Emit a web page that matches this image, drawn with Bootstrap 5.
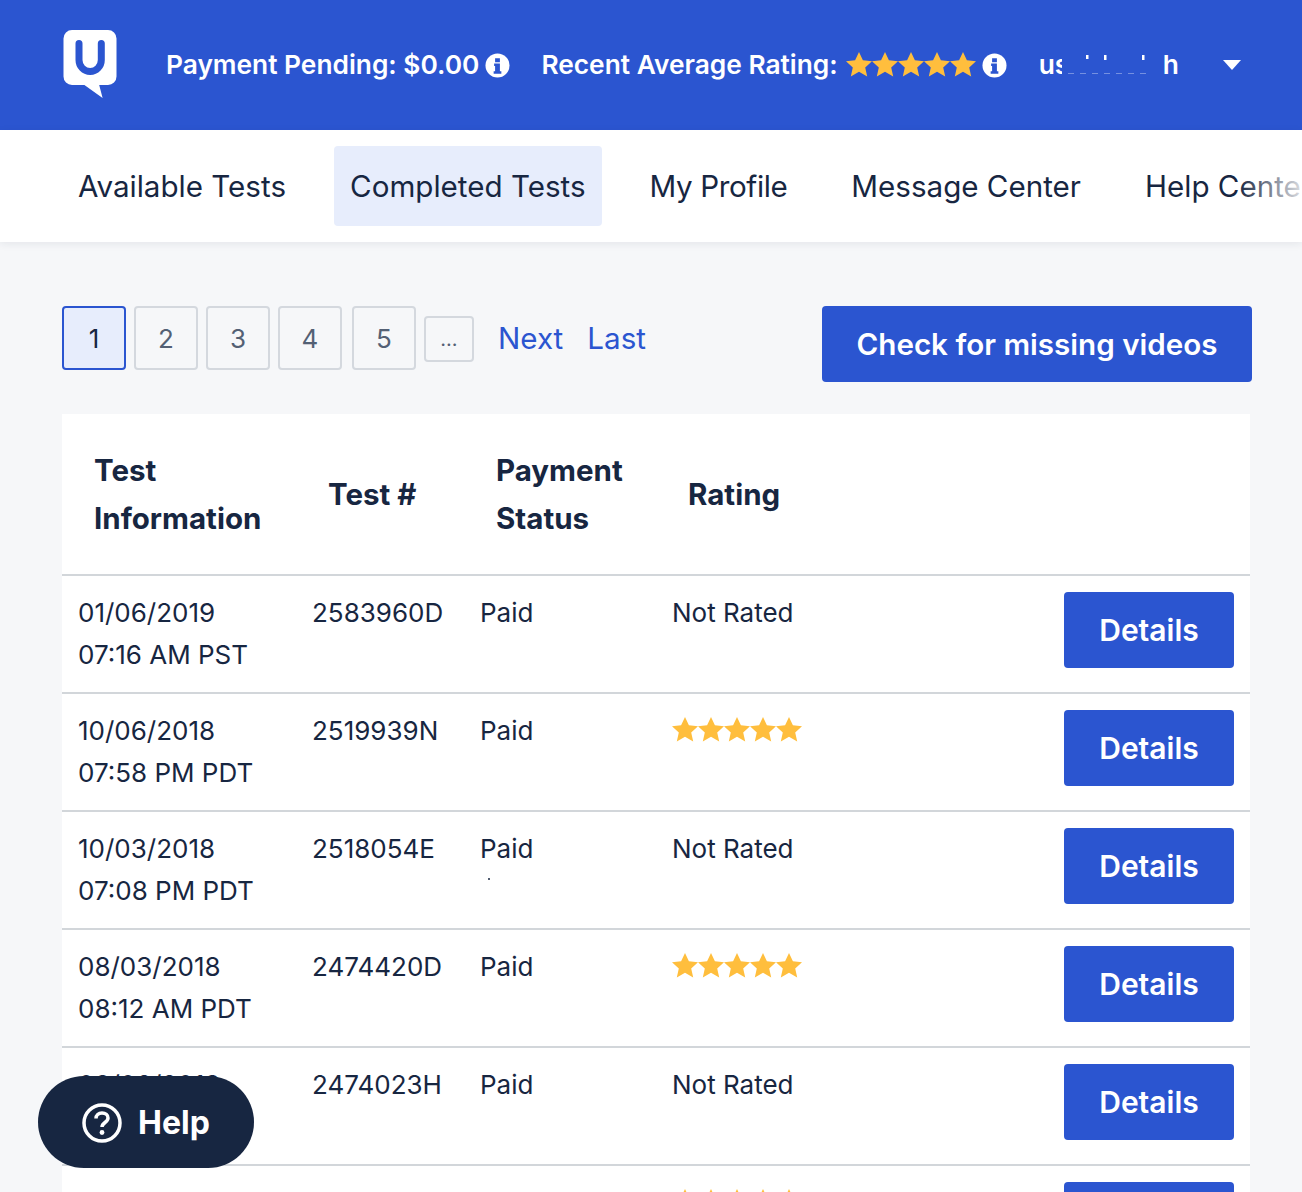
<!DOCTYPE html>
<html lang="en"><head><meta charset="utf-8"><title>Completed Tests</title>
<link href="https://cdn.jsdelivr.net/npm/bootstrap@5.3.0/dist/css/bootstrap.min.css" rel="stylesheet">
<style>
html,body{height:1192px;overflow:hidden}
body{background:#f6f7f9;font-family:Inter,"Liberation Sans",sans-serif;color:#172641;font-size:26px}
.top-bar{background:#2b55d0;height:130px;color:#fff;font-weight:600;font-size:26.3px;white-space:nowrap}
.brand-mark{margin-left:63px;margin-right:49px;margin-bottom:2px}
.info-ico{margin-left:6px}
.rating-part{margin-left:31px}
.user-name{margin-left:32px;width:184px}
.user-cut{display:inline-block;width:23px;overflow:hidden}
.tab-strip{background:#fff;height:112px;box-shadow:0 2px 8px rgba(23,38,65,.08);overflow:hidden;white-space:nowrap;padding:16px 0 16px 62px;gap:32px}
.tab-item{color:#172641;text-decoration:none;font-size:29.6px;padding:0 16px;height:80px;line-height:80px;border-radius:4px;flex:none}
.tab-item.is-on{background:#e7edfc}
.tab-tight{letter-spacing:-.4px}
.tab-fade{position:absolute;right:0;top:130px;width:64px;height:110px;background:linear-gradient(90deg,rgba(255,255,255,0),rgba(255,255,255,.85))}
.page-area{padding:64px 50px 0 62px}
.pager-box{width:64px;height:64px;border:2px solid #d4d8de;border-radius:4px;color:#536074;text-decoration:none;flex:none}
.pager-box.is-on{border-color:#2b55d0;background:#e7edfc;color:#172641}
.pager-box.is-last{margin-left:2px}
.pager-gap{width:50px;height:46px;font-size:20px;margin-top:10px}
.pager-link{color:#2b55d0;text-decoration:none;font-size:29.6px;margin-top:10px;margin-left:16px}
.act-btn{background:#2b55d0;color:#fff;border:0;border-radius:4px;font-weight:600}
.act-btn:hover{background:#2b55d0;color:#fff}
.wide-btn{width:430px;height:76px;font-size:29.6px}
.row-btn{width:170px;height:76px;font-size:30px}
.data-box{margin-top:32px;width:1188px}
.data-box table{background:#fff;width:100%;table-layout:fixed;margin:0;color:#172641}
.data-box th{font-size:29.5px;line-height:48px;padding:32px;font-weight:700;vertical-align:middle;border-bottom:2px solid #d2d6da;height:161px}
.data-box td{padding:16px;line-height:42px;vertical-align:top;border-bottom:2px solid #d2d6da;height:118px}
.data-box th:nth-child(5){padding:0}
.star-row{margin-top:7px}
.help-pill{position:fixed;left:38px;top:1076px;width:216px;height:92px;padding-top:2px;border-radius:46px;background:#172641;color:#fff;font-weight:700;font-size:32px}
.speck{position:absolute;left:488px;top:878px;width:2px;height:2px;background:#172641;border-radius:50%}
</style></head><body>
<svg width="0" height="0" class="position-absolute"><defs>
<symbol id="star" viewBox="0 0 26 26"><path fill="#ffbe3d" d="M13 0l3.900 8.300 9.100 1-6.800 6.100 2 9-8.200-4.600-8.200 4.600 2-9L0 9.300l9.100-1z"/></symbol>
<symbol id="info" viewBox="0 0 26 26"><circle cx="13" cy="13" r="12.5" fill="#fff"/><path fill="#2b55d0" d="M10.500 5.500h5v4h-5zM9.500 11h6v8h1.500v2.500H9v-2.500h1.500v-5.500h-1z"/></symbol>
</defs></svg>
<header class="top-bar d-flex align-items-center">
<svg class="brand-mark" width="54" height="68" viewBox="0 0 54 68" role="img" aria-label="Logo"><path fill="#fff" d="M9 0h36a8.500 8.500 0 0 1 8.500 8.500v38a8.500 8.500 0 0 1-8.500 8.500h-8.800l3.400 13-18.200-13H9a8.500 8.500 0 0 1-8.500-8.500v-38A8.500 8.500 0 0 1 9 0z"/><path fill="none" stroke="#2b55d0" stroke-width="7" stroke-linecap="round" d="M16 13.500V30a11.150 11.500 0 0 0 22.300 0V13.500"/></svg>
<span class="d-flex align-items-center">Payment Pending: $0.00<svg class="info-ico" width="25" height="25"><use href="#info"/></svg></span>
<span class="rating-part d-flex align-items-center">Recent Average Rating:<span class="d-inline-flex ms-2"><svg width="26" height="26"><use href="#star"/></svg><svg width="26" height="26"><use href="#star"/></svg><svg width="26" height="26"><use href="#star"/></svg><svg width="26" height="26"><use href="#star"/></svg><svg width="26" height="26"><use href="#star"/></svg></span><svg class="info-ico" width="25" height="25"><use href="#info"/></svg></span>
<span class="user-name d-flex align-items-center"><span class="user-cut">us</span><svg width="101" height="30"><path fill="#fff" d="M24 5h2.500v4H24zM42 5h2.500v5H42zM80 5h2.500v5H80z"/><path fill="#fff" opacity=".35" d="M6 23h6v1H6zM18 23h6v1h-6zM30 23h6v1h-6zM42 23h6v1h-6zM54 23h6v1h-6zM66 23h6v1h-6zM78 23h6v1h-6z"/></svg>h</span>
<svg width="18" height="10" viewBox="0 0 18 10"><path fill="#fff" d="M0 0h18L9 10z"/></svg>
</header>
<nav class="tab-strip d-flex">
<a class="tab-item" href="#">Available Tests</a>
<a class="tab-item is-on" href="#">Completed Tests</a>
<a class="tab-item tab-tight" href="#">My Profile</a>
<a class="tab-item" href="#">Message Center</a>
<a class="tab-item" href="#">Help Center</a>
</nav>
<div class="tab-fade"></div>
<main class="page-area">
<div class="d-flex align-items-start">
<div class="d-flex gap-2 align-items-start">
<a class="pager-box is-on d-flex align-items-center justify-content-center" href="#">1</a>
<a class="pager-box d-flex align-items-center justify-content-center" href="#">2</a>
<a class="pager-box d-flex align-items-center justify-content-center" href="#">3</a>
<a class="pager-box d-flex align-items-center justify-content-center" href="#">4</a>
<a class="pager-box is-last d-flex align-items-center justify-content-center" href="#">5</a>
<span class="pager-box pager-gap d-flex align-items-center justify-content-center">...</span>
<a class="pager-link" href="#">Next</a>
<a class="pager-link" href="#">Last</a>
</div>
<button class="btn act-btn wide-btn ms-auto" type="button">Check for missing videos</button>
</div>
<div class="data-box">
<table class="table">
<colgroup><col style="width:234px"><col style="width:168px"><col style="width:192px"><col style="width:374px"><col></colgroup>
<thead><tr><th>Test Information</th><th>Test #</th><th>Payment Status</th><th>Rating</th><th></th></tr></thead>
<tbody>
<tr><td>01/06/2019<br>07:16 AM PST</td><td>2583960D</td><td>Paid</td><td>Not Rated</td><td class="text-end"><button class="btn act-btn row-btn" type="button">Details</button></td></tr>
<tr><td>10/06/2018<br>07:58 PM PDT</td><td>2519939N</td><td>Paid</td><td><div class="star-row d-flex"><svg width="26" height="26"><use href="#star"/></svg><svg width="26" height="26"><use href="#star"/></svg><svg width="26" height="26"><use href="#star"/></svg><svg width="26" height="26"><use href="#star"/></svg><svg width="26" height="26"><use href="#star"/></svg></div></td><td class="text-end"><button class="btn act-btn row-btn" type="button">Details</button></td></tr>
<tr><td>10/03/2018<br>07:08 PM PDT</td><td>2518054E</td><td>Paid</td><td>Not Rated</td><td class="text-end"><button class="btn act-btn row-btn" type="button">Details</button></td></tr>
<tr><td>08/03/2018<br>08:12 AM PDT</td><td>2474420D</td><td>Paid</td><td><div class="star-row d-flex"><svg width="26" height="26"><use href="#star"/></svg><svg width="26" height="26"><use href="#star"/></svg><svg width="26" height="26"><use href="#star"/></svg><svg width="26" height="26"><use href="#star"/></svg><svg width="26" height="26"><use href="#star"/></svg></div></td><td class="text-end"><button class="btn act-btn row-btn" type="button">Details</button></td></tr>
<tr><td>08/02/2018<br>07:11 AM PDT</td><td>2474023H</td><td>Paid</td><td>Not Rated</td><td class="text-end"><button class="btn act-btn row-btn" type="button">Details</button></td></tr>
<tr><td></td><td></td><td></td><td><div class="star-row d-flex"><svg width="26" height="26"><use href="#star"/></svg><svg width="26" height="26"><use href="#star"/></svg><svg width="26" height="26"><use href="#star"/></svg><svg width="26" height="26"><use href="#star"/></svg><svg width="26" height="26"><use href="#star"/></svg></div></td><td class="text-end"><button class="btn act-btn row-btn" type="button">Details</button></td></tr>
</tbody></table>
</div>
</main>
<span class="speck"></span>
<div class="help-pill d-flex align-items-center justify-content-center gap-3"><svg width="40" height="40" viewBox="0 0 40 40"><circle cx="20" cy="20" r="18" fill="none" stroke="#fff" stroke-width="3.500"/><path fill="none" stroke="#fff" stroke-width="3.500" d="M14 15.500c0-3.500 2.500-5.500 6-5.500s6 2 6 5c0 4.500-6 4.500-6 9"/><circle cx="20" cy="29.500" r="2.400" fill="#fff"/></svg><span>Help</span></div>
</body></html>
